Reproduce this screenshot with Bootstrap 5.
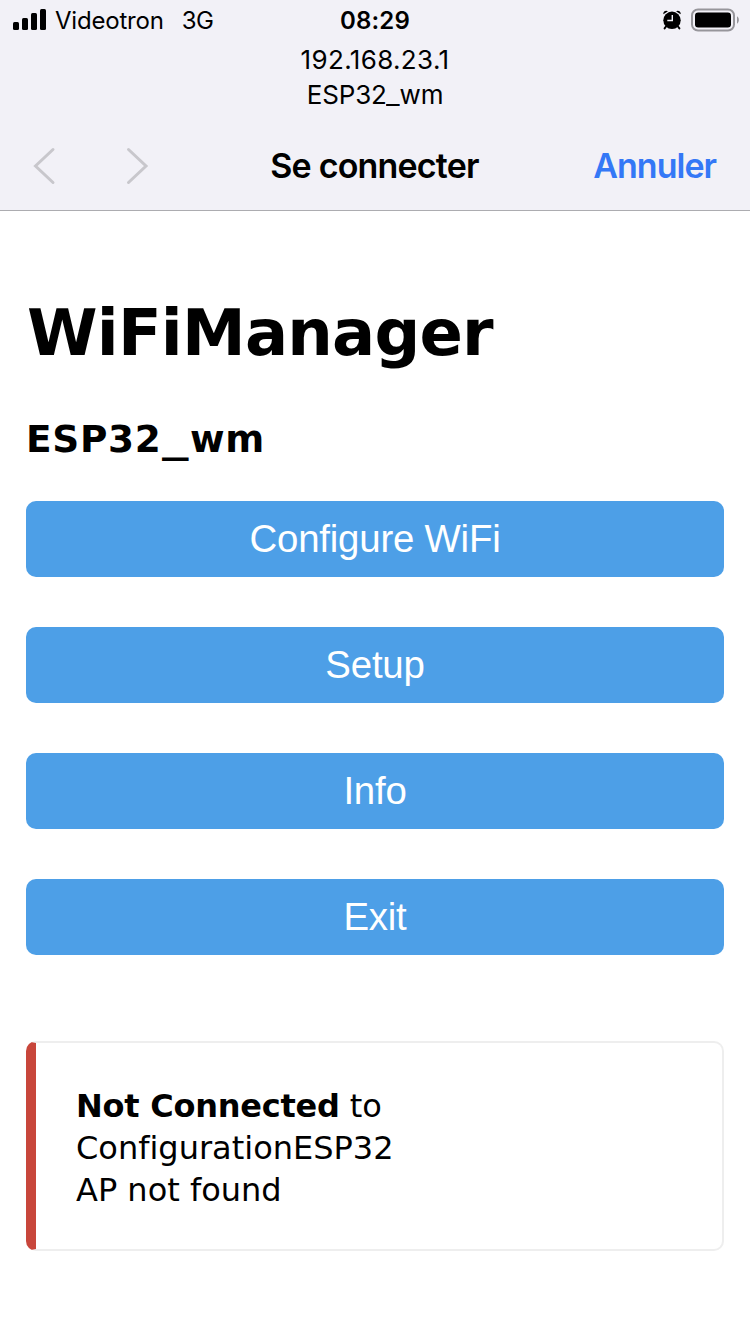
<!DOCTYPE html>
<html lang="fr">
<head>
<meta charset="utf-8">
<meta name="viewport" content="width=device-width, initial-scale=1">
<title>WiFiManager</title>
<link href="https://cdn.jsdelivr.net/npm/bootstrap@5.3.0/dist/css/bootstrap.min.css" rel="stylesheet">
<style>
  body { font-family: "DejaVu Sans", sans-serif; color: #000; background: #fff; font-variant-ligatures: none; }
  .sheet-head { height: 211px; background: #f2f1f7; border-bottom: 1px solid #acacb0; font-family: Inter, sans-serif; }
  .status-row { display: grid; grid-template-columns: 1fr auto 1fr; height: 42px; padding: 0 11px 2px 13px; font-size: 24px; line-height: 38px; }
  .status-row span, .clock { padding-top: 2px; }
  .carrier { letter-spacing: -.2px; margin-left: 9px; }
  .radio { margin-left: 18px; letter-spacing: -.6px; }
  .clock { font-weight: 600; letter-spacing: .2px; padding-right: 2px; }
  .host { font-size: 26px; line-height: 35px; }
  .ip { letter-spacing: .35px; }
  .nav-row { display: grid; grid-template-columns: 1fr auto 1fr; height: 98px; padding: 9px 34px 0 33px; font-size: 34px; font-weight: 600; }
  .nav-title { letter-spacing: -.8px; }
  .arrows { gap: 70px; }
  .cancel { color: #3478f6; font-weight: 600; letter-spacing: -1px; text-decoration: none; }
  .portal { padding: 83px 26px 0; }
  .portal h1 { font-size: 64px; line-height: 78px; font-weight: 700; margin: 0 0 44px; padding-left: 1px; letter-spacing: -.8px; }
  .portal h3 { font-size: 37.44px; line-height: 46px; font-weight: 700; margin: 0 0 39px; letter-spacing: .7px; }
  .wide { display: inline-block; transform: scaleX(1.42); margin: 0 4.5px; }
  .host .wide { transform: scaleX(1.15); margin: 0 .5px; }
  .host .name { letter-spacing: -.15px; }
  .menu-list { gap: 50px; }
  .btn-portal, .btn-portal:hover { height: 76px; padding: 0 0 2px; border: 0; border-radius: 10px; background: #4d9fe7; color: #fff; font: 38.4px/71px "Liberation Sans", sans-serif; letter-spacing: -.2px; }
  .notice { margin-top: 86px; padding: 42px 40px 38px; border: 2px solid #eee; border-left: 10px solid #c8463b; border-radius: 10px; font-size: 32px; line-height: 42px; }
  .notice strong { letter-spacing: -.25px; }
</style>
</head>
<body>
<header class="sheet-head">
  <div class="status-row align-items-center text-nowrap">
    <div class="d-flex align-items-center">
      <svg width="33" height="22" viewBox="0 0 33 22"><rect x="0" y="13" width="6" height="8" rx="1.5"/><rect x="9" y="9" width="6" height="12" rx="1.5"/><rect x="18" y="4" width="6" height="17" rx="1.5"/><rect x="27" y="0" width="6" height="21" rx="1.5"/></svg>
      <span class="carrier">Videotron</span><span class="radio">3G</span>
    </div>
    <div class="clock">08:29</div>
    <div class="d-flex align-items-center justify-content-end gap-2">
      <svg width="20" height="22" viewBox="0 0 20 22"><circle cx="9" cy="11.3" r="8.7"/><path d="M.4 5.2C-.2 2.6 2.6.6 5 2.2zM17.6 5.2C18.2 2.6 15.4.6 13 2.2z"/><path d="M3 17.5 1.6 19.4M15 17.5l1.4 1.9" fill="none" stroke="#000" stroke-width="2" stroke-linecap="round"/><path d="M9.3 6v5.5H4.3" fill="none" stroke="#f2f1f7" stroke-width="1.4"/></svg>
      <svg width="48" height="24" viewBox="0 0 48 24"><rect x="1" y="1.5" width="42" height="21" rx="6" fill="none" stroke="#97969b" stroke-width="2"/><rect x="4" y="4.5" width="36" height="15" rx="3.2"/><path d="M46 8.3c2.5 1.6 2.5 5.8 0 7.4z" fill="#97969b"/></svg>
    </div>
  </div>
  <div class="host text-center"><span class="ip">192.168.23.1</span><br><span class="name">ESP32<span class="wide">_</span>wm</span></div>
  <nav class="nav-row align-items-center text-nowrap">
    <div class="arrows d-flex align-items-center">
      <svg width="23" height="38" viewBox="0 0 23 38" fill="none" stroke="#c8c7cc" stroke-width="3" stroke-linecap="round"><path d="M20 2.5 2.5 19 20 35.5"/></svg>
      <svg width="23" height="38" viewBox="0 0 23 38" fill="none" stroke="#c8c7cc" stroke-width="3" stroke-linecap="round"><path d="M2.5 2.5 20 19 2.5 35.5"/></svg>
    </div>
    <div><span class="nav-title">Se connecter</span></div>
    <div class="text-end"><a class="cancel" href="#">Annuler</a></div>
  </nav>
</header>
<main class="portal">
  <h1>WiFiManager</h1>
  <h3>ESP32<span class="wide">_</span>wm</h3>
  <div class="menu-list d-grid">
    <button class="btn btn-portal" type="button">Configure WiFi</button>
    <button class="btn btn-portal" type="button">Setup</button>
    <button class="btn btn-portal" type="button">Info</button>
    <button class="btn btn-portal" type="button">Exit</button>
  </div>
  <div class="notice"><strong>Not Connected</strong> to<br>ConfigurationESP32<br>AP not found</div>
</main>
<script src="https://cdn.jsdelivr.net/npm/bootstrap@5.3.0/dist/js/bootstrap.bundle.min.js"></script>
</body>
</html>
